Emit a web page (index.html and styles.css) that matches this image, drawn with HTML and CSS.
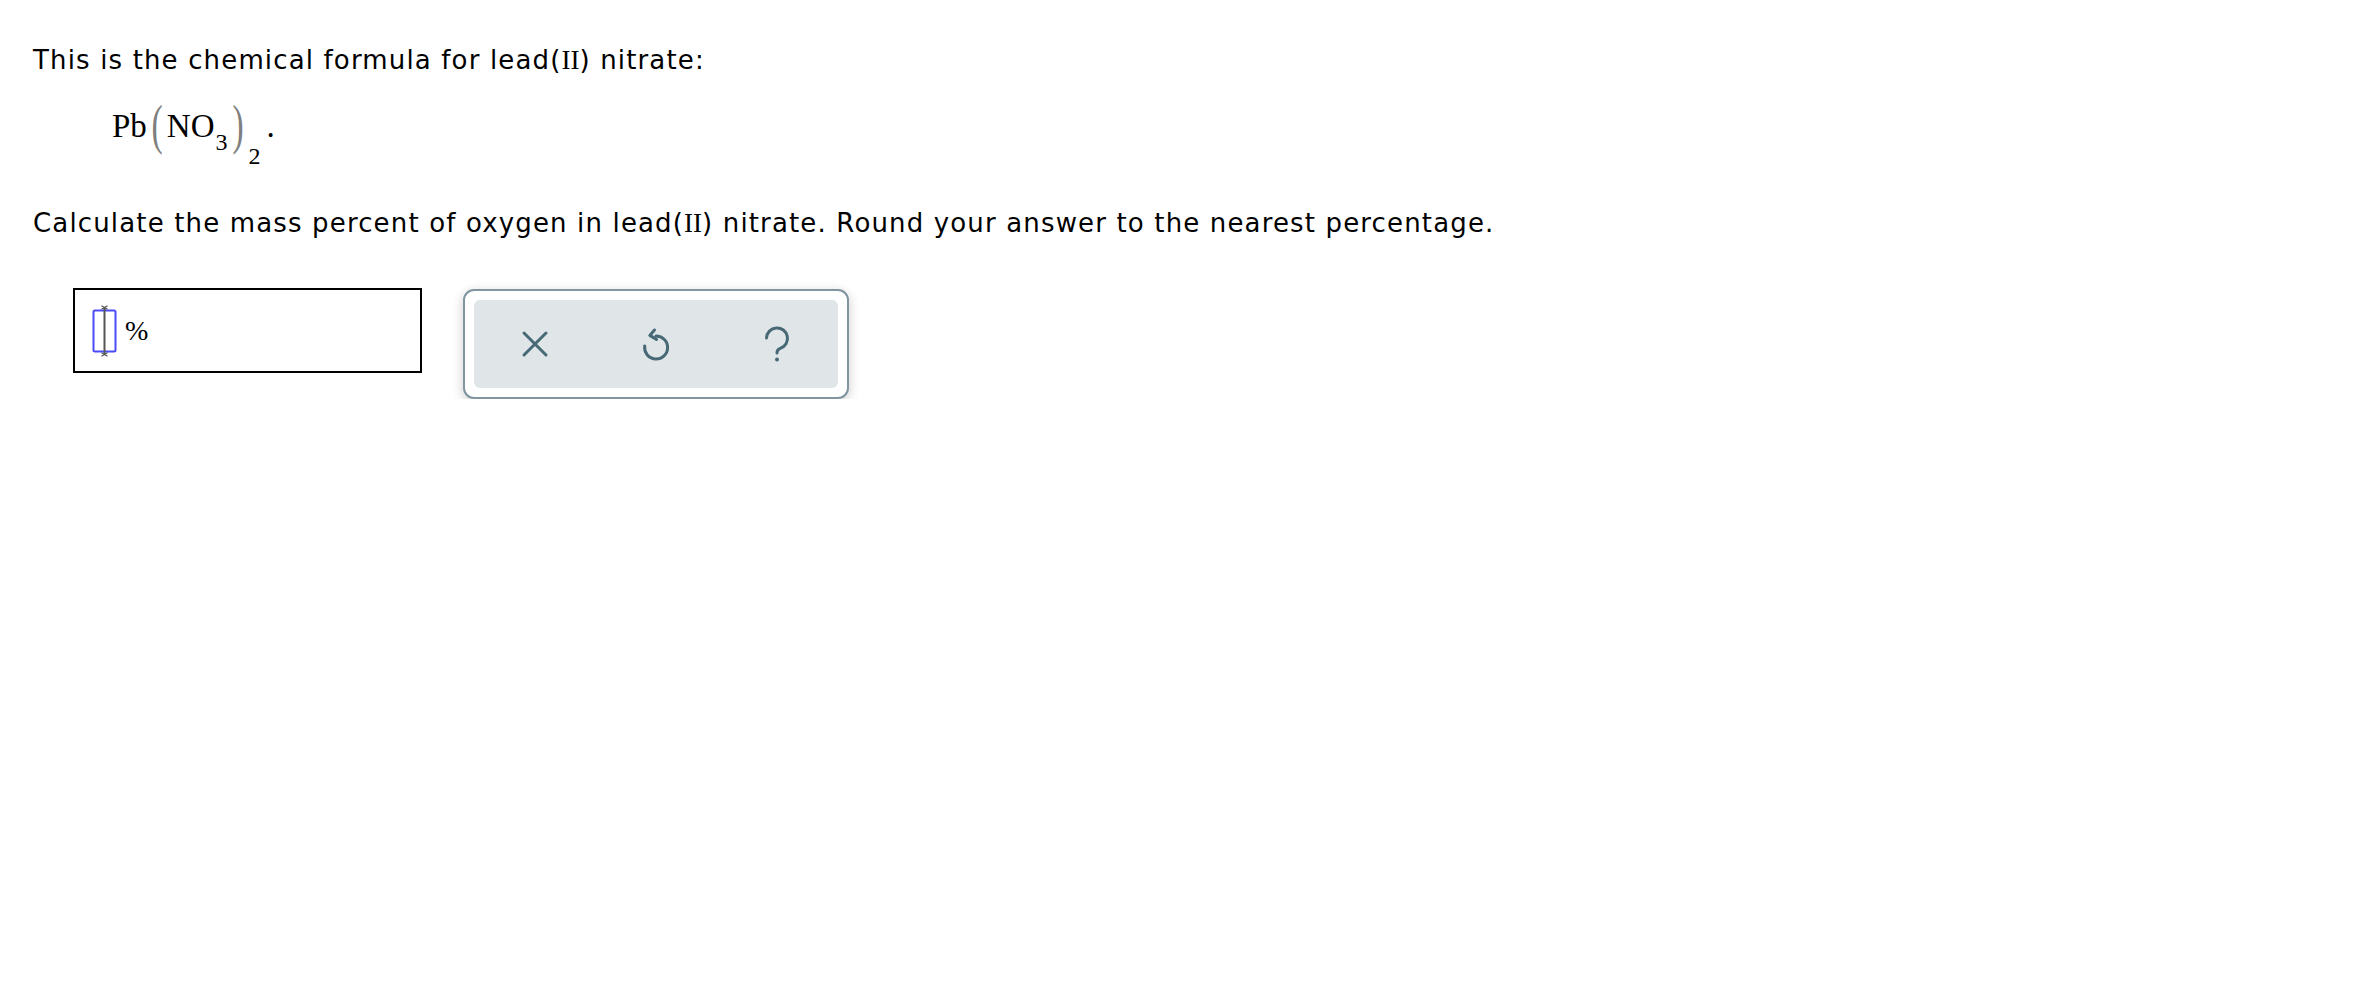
FILE: index.html
```html
<!DOCTYPE html>
<html lang="en">
<head>
<meta charset="utf-8">
<title>Lead(II) nitrate</title>
<link rel="stylesheet" href="styles.css">
</head>
<body>
<div class="page">
  <p class="line first">This is the chemical formula for lead(<span class="rn">II</span>) nitrate:</p>
  <div class="formula">
    <span class="el">Pb</span><span class="paren open">(</span><span class="el">NO</span><span class="sub s3">3</span><span class="paren close">)</span><span class="sub s2">2</span><span class="dot">.</span>
  </div>
  <p class="line second">Calculate the mass percent of oxygen in lead(<span class="rn">II</span>) nitrate. Round your answer to the nearest percentage.</p>
  <div class="answer-row">
    <div class="answer-box">
      <svg class="caret" width="25" height="52" viewBox="0 0 25 52" aria-hidden="true">
        <rect x="1.5" y="5.5" width="22" height="41" rx="1.5" fill="none" stroke="#4b4bf7" stroke-width="2"/>
        <path d="M12.5 2.5 V49.5" stroke="#555" stroke-width="2" fill="none"/>
        <path d="M9.5 0.8 L15.5 4.2 M15.5 0.8 L9.5 4.2 M9.5 47.8 L15.5 51.2 M15.5 47.8 L9.5 51.2" stroke="#555" stroke-width="1.2" fill="none"/>
      </svg>
      <span class="unit">%</span>
    </div>
    <div class="tools">
      <div class="tools-inner">
        <button class="tool" type="button" aria-label="Clear">
          <svg width="28" height="28" viewBox="0 0 28 28"><path d="M3 3 L25 25 M25 3 L3 25" stroke="#476875" stroke-width="3" stroke-linecap="round" fill="none"/></svg>
        </button>
        <button class="tool" type="button" aria-label="Undo">
          <svg width="30" height="34" viewBox="0 0 30 34"><path d="M15 9 A11.5 11.5 0 1 1 3.7 19" stroke="#476875" stroke-width="3" stroke-linecap="round" fill="none"/><path d="M13.5 3 L8.8 8.4 L15.5 12.4" stroke="#476875" stroke-width="3" stroke-linecap="round" stroke-linejoin="round" fill="none"/></svg>
        </button>
        <button class="tool" type="button" aria-label="Help">
          <svg width="26" height="38" viewBox="0 0 26 38"><path d="M2.5 13 A10.5 10.5 0 1 1 16.2 23.4 Q13 24.8 13 27.5 V28" stroke="#476875" stroke-width="3" stroke-linecap="round" fill="none"/><circle cx="13" cy="34.6" r="2" fill="#476875"/></svg>
        </button>
      </div>
    </div>
  </div>
</div>
</body>
</html>
```

FILE: styles.css
```css
html, body {
  margin: 0;
  padding: 0;
  background: #ffffff;
}

.page {
  padding: 0 0 0 33px;
  color: #000;
  font-family: "DejaVu Sans", Verdana, sans-serif;
}

.line {
  margin: 0;
  font-size: 26px;
  line-height: 32px;
  letter-spacing: 1.15px;
  white-space: nowrap;
}

.line.first {
  margin-top: 44px;
}

.line.second {
  margin-top: 0;
}

.rn {
  font-family: "Liberation Serif", "Times New Roman", serif;
  font-size: 27px;
  letter-spacing: 0;
}

.formula {
  margin: 30px 0 61px 79px;
  height: 40px;
  line-height: 40px;
  font-family: "Liberation Serif", "Times New Roman", serif;
  font-size: 33px;
  white-space: nowrap;
}

.formula > span {
  line-height: 0;
}

.paren {
  display: inline-block;
  font-size: 54px;
  color: #7f7f7f;
  transform: scaleX(0.62);
  vertical-align: -6px;
}

.paren.open {
  margin: 0 1px 0 1px;
}

.paren.close {
  margin: 0 0 0 1px;
}

.sub {
  font-size: 24px;
}

.s3 {
  margin-left: 1px;
  vertical-align: -13px;
}

.s2 {
  margin-left: 2px;
  vertical-align: -27px;
}

.dot {
  margin-left: 6px;
  vertical-align: 0;
}

.answer-row {
  display: flex;
  align-items: flex-start;
  gap: 41px;
  margin: 49px 0 0 40px;
}

.answer-box {
  box-sizing: border-box;
  width: 349px;
  height: 85px;
  border: 2px solid #000;
  display: flex;
  align-items: center;
  padding: 0 0 0 17px;
}

.caret {
  display: block;
  flex: none;
}

.unit {
  margin-left: 8px;
  font-family: "Liberation Serif", "Times New Roman", serif;
  font-size: 28px;
  line-height: 1;
}

.tools {
  box-sizing: border-box;
  margin-top: 1px;
  width: 386px;
  height: 110px;
  border: 2px solid #8195a0;
  border-radius: 11px;
  background: #fff;
  padding: 9px;
  box-shadow: 0 3px 12px rgba(0, 0, 0, 0.2);
}

.tools-inner {
  height: 100%;
  background: #e0e5e8;
  border-radius: 6px;
  display: grid;
  grid-template-columns: repeat(3, 1fr);
}

.tool {
  border: 0;
  margin: 0;
  padding: 0;
  background: transparent;
  display: flex;
  align-items: center;
  justify-content: center;
  cursor: pointer;
}

.tool svg {
  display: block;
}
```
